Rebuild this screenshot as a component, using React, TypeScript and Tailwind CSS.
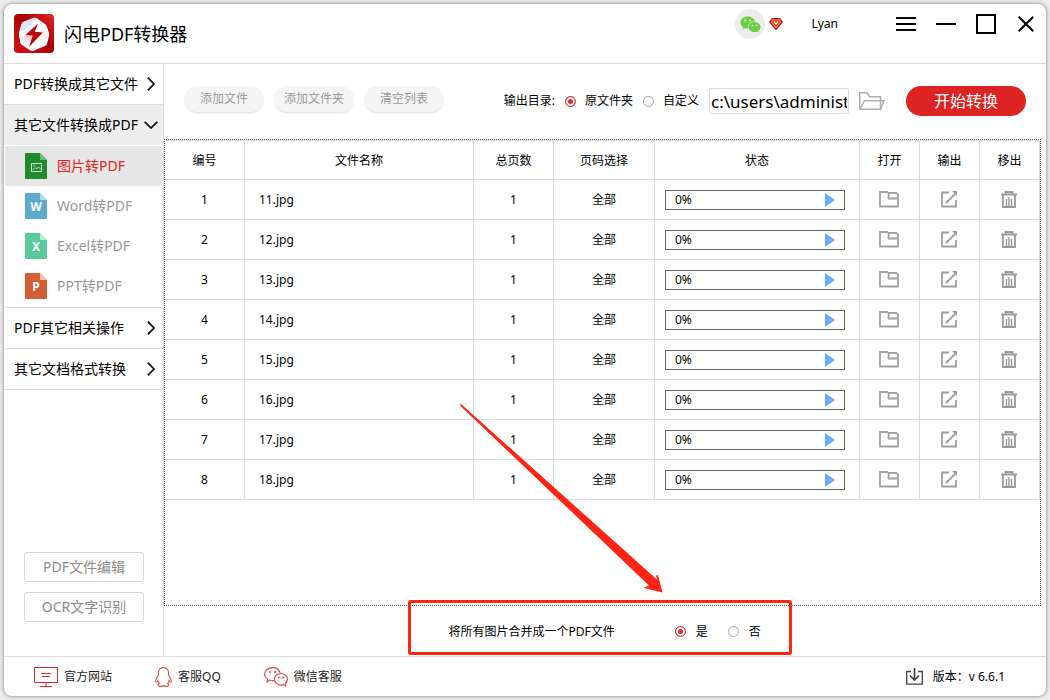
import { useState } from 'react';
import type { ReactNode } from 'react';
import { AiFillWechat } from 'react-icons/ai';

const files = [11, 12, 13, 14, 15, 16, 17, 18].map((n, i) => ({ id: i + 1, name: `${n}.jpg` }));

const radioClass =
  'size-[11px] shrink-0 appearance-none rounded-full border border-[#a8a8a8] bg-white checked:border-[#e02c2c] checked:bg-[#e02c2c] checked:shadow-[inset_0_0_0_2px_white]';

function Logo() {
  return (
    <svg width="40" height="40" viewBox="0 0 40 40" className="shrink-0" aria-hidden="true">
      <defs>
        <linearGradient id="logoBg" x1="1" y1="0" x2="0.2" y2="0.8">
          <stop offset="0" stopColor="#e62722" />
          <stop offset="0.55" stopColor="#a80007" />
          <stop offset="1" stopColor="#c90f14" />
        </linearGradient>
        <linearGradient id="logoPink" x1="1" y1="0" x2="0" y2="1">
          <stop offset="0" stopColor="#f0b4b8" />
          <stop offset="1" stopColor="#ffffff" />
        </linearGradient>
      </defs>
      <rect width="40" height="39" rx="4" fill="url(#logoBg)" />
      <path d="M18 4.500q3-1.500 5.500.3l7.500 5.200q1.500 1 2 3l2 6q.5 2-.2 4l-1.800 7q-.5 1.500-2 2L20 36.500q-2 .8-4-.3L8 31q-1.600-1-1.900-3L5 20q-.2-1.500.3-3L7.500 10q.6-1.600 2-2.200z" fill="#fff" />
      <path d="M18 4.500q3-1.500 5.500.3L13 15l-7 2 2-7q.5-1.600 2-2.200z" fill="#dfe4f2" />
      <path d="M12 21L5.500 24 5 19l8-3z" fill="#fff" />
      <path d="M12 20.500l7 1-2 5L6.500 29 6 25z" fill="url(#logoPink)" />
      <path d="M27 19l8-1-1 6-10 4z" fill="#fbeeee" />
      <path d="M24 9.500L11.500 21l7.200.6L15 33l13.800-14.500-8.100-.7z" fill="#b9060c" />
    </svg>
  );
}

function DiamondIcon() {
  return (
    <svg width="14" height="13" viewBox="0 0 14 13" aria-hidden="true">
      <path d="M3 0h8l3 4-7 8.500L0 4z" fill="#c4161c" />
      <path d="M3.500 1.500h7L12 4l-5 6.500L2 4z" fill="#f3b13d" />
      <path d="M4 2.500h6L11 4 7 9 3 4z" fill="#d3222a" />
      <path d="M4.800 3.500L7 6l2.200-2.500" fill="none" stroke="#fff" strokeWidth="1.300" />
    </svg>
  );
}

function Chevron({ open = false }: { open?: boolean }) {
  return open ? (
    <svg width="14" height="8" viewBox="0 0 14 8" fill="none" stroke="#111" strokeWidth="1.700" aria-hidden="true">
      <path d="M.7.8L7 7l6.300-6.200" />
    </svg>
  ) : (
    <svg width="8" height="14" viewBox="0 0 8 14" fill="none" stroke="#111" strokeWidth="1.700" aria-hidden="true">
      <path d="M.8.700L7 7 .8 13.300" />
    </svg>
  );
}

function FileIcon({ color, fold, children }: { color: string; fold: string; children: ReactNode }) {
  return (
    <span className="relative flex h-[26px] w-[22px] shrink-0 items-center justify-center pt-[2px] text-xs leading-none font-bold text-white">
      <svg className="absolute inset-0" width="22" height="26" viewBox="0 0 22 26" aria-hidden="true">
        <path d="M1 0h14l7 7v18a1 1 0 0 1-1 1H1a1 1 0 0 1-1-1V1a1 1 0 0 1 1-1z" fill={color} />
        <path d="M15 0l7 7h-6a1 1 0 0 1-1-1z" fill={fold} />
      </svg>
      <span className="relative">{children}</span>
    </span>
  );
}

function PictureGlyph() {
  return (
    <svg width="11" height="9" viewBox="0 0 11 9" fill="none" stroke="#c9e6cb" aria-hidden="true">
      <rect x=".5" y=".5" width="10" height="8" />
      <path d="M2 6.500L4 4.500l1.500 1.500L7.500 4 9.500 6" />
      <circle cx="3.200" cy="2.700" r=".4" />
    </svg>
  );
}

function FolderOpenIcon() {
  return (
    <svg width="26" height="18" viewBox="0 0 26 18" fill="none" stroke="#b0b0b0" strokeWidth="1.500" aria-hidden="true">
      <path d="M.75 17.250V.75H8l2.500 4H21.500v12.500z" />
      <path d="M1 17L5.500 8.750H25L21.500 17.250" />
    </svg>
  );
}

function OpenIcon() {
  return (
    <svg width="20" height="17" viewBox="0 0 20 17" fill="none" stroke="#a0a0a0" strokeWidth="2" aria-hidden="true">
      <path d="M9 1H1v14.500h18V3.500L17.500 2H9.500V7.500H19" strokeWidth="1.800" />
    </svg>
  );
}

function ExportIcon() {
  return (
    <svg width="17" height="17" viewBox="0 0 17 17" fill="none" stroke="#a0a0a0" strokeWidth="2" aria-hidden="true">
      <path d="M8 1.500H1V15.500h14V9" strokeWidth="1.800" />
      <path d="M5 12L15 2" strokeWidth="1.800" />
      <path d="M11 0h5v5z" fill="#a0a0a0" stroke="none" />
    </svg>
  );
}

function TrashIcon() {
  return (
    <svg width="16" height="17" viewBox="0 0 16 17" fill="none" stroke="#999" strokeWidth="1.800" aria-hidden="true">
      <path d="M0 3.500h16M4.500 3V1h7v2M2 4v12h12V4" />
      <path d="M5.500 8v8M8 6v10M10.500 8v8" strokeWidth="1.400" />
    </svg>
  );
}

function MonitorIcon() {
  return (
    <svg width="24" height="20" viewBox="0 0 24 20" fill="none" stroke="#dd2a2a" aria-hidden="true">
      <path d="M.5.500h23v15H.5zM7 6.500h10M8 9.500h8M12 16v3M6 19.500h12" />
    </svg>
  );
}

function QqIcon() {
  return (
    <svg width="17" height="20" viewBox="0 0 17 20" fill="none" stroke="#e04545" strokeWidth="1.100" aria-hidden="true">
      <path d="M3.500 7C3.200 2.800 5 .6 8.500.6S13.800 2.800 13.500 7c0 1.200.5 1.800 1.200 3 1.300 2.300 2 4.300 1.400 5-.6.400-1.500-.9-1.900-1.300-.2 1.400-.9 2.400-1.600 3 1 .5 1.600 1.200 1 2-.8 1-4 .8-5.100-.2-1.100 1-4.300 1.200-5.100.2-.6-.8 0-1.500 1-2-.7-.6-1.400-1.600-1.600-3-.4.400-1.300 1.700-1.900 1.300-.6-.7.100-2.700 1.400-5 .7-1.200 1.200-1.800 1.200-3z" />
    </svg>
  );
}

function WechatLineIcon() {
  return (
    <svg width="24" height="20" viewBox="0 0 24 20" fill="none" stroke="#e04545" strokeWidth="1.100" aria-hidden="true">
      <path d="M10 13.500c-1.500.3-3 .1-4.300-.4L3 15l.6-2.900C1.700 10.800.6 9 .6 7 .6 3.500 4 .6 8.500.6c4 0 7 2.300 7.700 5.400" />
      <path d="M17 6.500c-3.800 0-6.500 2.600-6.500 5.800s2.700 5.800 6.500 5.800c1 0 1.900-.2 2.700-.5l2 1.300-.4-2.200c1.300-1 2.100-2.600 2.100-4.400 0-3.200-2.700-5.800-6.400-5.800z" />
      <g fill="#e04545" stroke="none">
        <circle cx="6" cy="5" r="1" />
        <circle cx="11" cy="5" r="1" />
        <circle cx="14.800" cy="10.500" r=".9" />
        <circle cx="19.200" cy="10.500" r=".9" />
      </g>
    </svg>
  );
}

function DownloadIcon() {
  return (
    <svg width="17" height="17" viewBox="0 0 17 17" fill="none" stroke="#444" aria-hidden="true">
      <path d="M5 3.500H.7v12.700h15.600V3.500H12" strokeWidth="1.300" />
      <path d="M8.500 0v11.500M4 7.500L8.500 12 13 7.500" strokeWidth="1.700" />
    </svg>
  );
}

function TitleBar() {
  return (
    <header className="flex h-[60px] shrink-0 items-center border-b border-[#dcdcdc] pl-[10px]">
      <Logo />
      <h1 className="ml-[10px] text-lg leading-6">闪电PDF转换器</h1>
      <div className="ml-auto flex h-10 items-center self-start">
        <span className="flex size-[30px] items-center justify-center rounded-full bg-[#ececec]">
          <AiFillWechat size={23} color="#6bcf45" />
        </span>
        <span className="ml-1">
          <DiamondIcon />
        </span>
        <span className="mr-12 ml-7 text-xs">Lyan</span>
        <button type="button" aria-label="菜单" className="flex size-10 items-center justify-center">
          <svg width="20" height="14" viewBox="0 0 20 14" stroke="#000" strokeWidth="2">
            <path d="M0 1h20M0 7h20M0 13h20" />
          </svg>
        </button>
        <button type="button" aria-label="最小化" className="flex size-10 items-center justify-center">
          <svg width="20" height="2" viewBox="0 0 20 2" stroke="#000" strokeWidth="2">
            <path d="M0 1h20" />
          </svg>
        </button>
        <button type="button" aria-label="最大化" className="flex size-10 items-center justify-center">
          <svg width="20" height="20" viewBox="0 0 20 20" fill="none" stroke="#000" strokeWidth="2">
            <path d="M1 1h18v18H1z" />
          </svg>
        </button>
        <button type="button" aria-label="关闭" className="flex size-10 items-center justify-center">
          <svg width="16" height="16" viewBox="0 0 16 16" stroke="#000" strokeWidth="2">
            <path d="M.7.700l14.600 14.600M15.300.700L.7 15.300" />
          </svg>
        </button>
      </div>
    </header>
  );
}

function MenuGroup({ label, open }: { label: string; open?: boolean }) {
  return (
    <button
      type="button"
      aria-expanded={!!open}
      className={`flex h-[41px] w-full items-center justify-between border-b pl-[10px] text-sm ${
        open ? 'border-white bg-[#ededed] pr-[5px]' : 'border-[#dcdcdc] pr-2'
      }`}
    >
      {label}
      <Chevron open={open} />
    </button>
  );
}

function MenuItem({ label, icon, active }: { label: string; icon: ReactNode; active?: boolean }) {
  return (
    <a
      href="#"
      className={`mx-px flex h-10 items-center gap-[10px] pl-5 text-sm ${
        active ? 'bg-[#e6e6e6] text-[#dd2323]' : 'text-[#999]'
      }`}
    >
      {icon}
      {label}
    </a>
  );
}

function Sidebar() {
  return (
    <aside className="flex w-40 shrink-0 flex-col border-r border-[#dcdcdc]">
      <nav>
        <MenuGroup label="PDF转换成其它文件" />
        <MenuGroup label="其它文件转换成PDF" open />
        <div className="border-b border-[#dcdcdc] pb-px">
          <MenuItem active label="图片转PDF" icon={<FileIcon color="#1d8b2b" fold="#6fbd78"><PictureGlyph /></FileIcon>} />
          <MenuItem label="Word转PDF" icon={<FileIcon color="#5aabcd" fold="#b5d8e8">W</FileIcon>} />
          <MenuItem label="Excel转PDF" icon={<FileIcon color="#5acb9b" fold="#b8ead5">X</FileIcon>} />
          <MenuItem label="PPT转PDF" icon={<FileIcon color="#d35d35" fold="#ecc4b4">P</FileIcon>} />
        </div>
        <MenuGroup label="PDF其它相关操作" />
        <MenuGroup label="其它文档格式转换" />
      </nav>
      <div className="mt-auto mb-[34px] flex flex-col gap-[10px] pr-[19px] pl-5 text-sm text-[#8c8c8c]">
        <button type="button" className="h-[30px] rounded-[3px] border border-[#d9d9d9]">PDF文件编辑</button>
        <button type="button" className="h-[30px] rounded-[3px] border border-[#d9d9d9]">OCR文字识别</button>
      </div>
    </aside>
  );
}

function Toolbar() {
  const [target, setTarget] = useState('source');
  const [path, setPath] = useState('c:\\users\\administrator\\desktop');

  return (
    <div className="flex h-[75px] shrink-0 items-center px-5 pb-px text-xs">
      <div className="flex gap-[10px] text-[#999]">
        {['添加文件', '添加文件夹', '清空列表'].map((label) => (
          <button
            key={label}
            type="button"
            className="mb-1 h-[26px] w-20 rounded-full bg-[#f5f5f5] shadow-[0_2px_2px_-1px_#dddddd]"
          >
            {label}
          </button>
        ))}
      </div>
      <div className="ml-auto flex items-center gap-[10px]">
        <span>输出目录:</span>
        <label className="flex items-center gap-[9px]">
          <input type="radio" name="target" className={radioClass} checked={target === 'source'} onChange={() => setTarget('source')} />
          原文件夹
        </label>
        <label className="flex items-center gap-[9px]">
          <input type="radio" name="target" className={radioClass} checked={target === 'custom'} onChange={() => setTarget('custom')} />
          自定义
        </label>
        <input
          type="text"
          aria-label="输出目录"
          value={path}
          onChange={(e) => setPath(e.target.value)}
          className="h-[26px] w-[140px] rounded-xs border border-[#dcdcdc] px-px text-[17px] leading-6"
        />
        <button type="button" aria-label="浏览">
          <FolderOpenIcon />
        </button>
        <button type="button" className="ml-[11px] h-[30px] w-[120px] rounded-full bg-[#dd2423] text-base text-white">
          开始转换
        </button>
      </div>
    </div>
  );
}

const th = 'h-10 border-r border-b border-t border-[#dcdcdc] px-0 pt-[2px] pb-0 font-normal';
const td = 'h-10 border-r border-b border-[#dcdcdc] p-0 text-center';

function FileTable() {
  return (
    <div className="min-h-0 flex-1 border border-dotted border-[#555]">
      <table className="w-full table-fixed border-separate border-spacing-0 text-xs">
        <thead>
          <tr>
            <th className={`${th} w-20`}>编号</th>
            <th className={th}>文件名称</th>
            <th className={`${th} w-20`}>总页数</th>
            <th className={`${th} w-[101px]`}>页码选择</th>
            <th className={`${th} w-[205px]`}>状态</th>
            <th className={`${th} w-[60px]`}>打开</th>
            <th className={`${th} w-[60px]`}>输出</th>
            <th className={`${th} w-[60px]`}>移出</th>
          </tr>
        </thead>
        <tbody>
          {files.map((file) => (
            <tr key={file.id}>
              <td className={td}>{file.id}</td>
              <td className="h-10 border-r border-b border-[#dcdcdc] p-0 pl-[14px] text-left">{file.name}</td>
              <td className={td}>1</td>
              <td className={td}>全部</td>
              <td className={td}>
                <div className="mr-[14px] ml-[10px] flex h-5 items-center justify-between border border-[#666] px-[9px]">
                  0%
                  <svg width="10" height="14" viewBox="0 0 10 14" fill="#6aabff" aria-hidden="true">
                    <path d="M0 0l10 7-10 7z" />
                  </svg>
                </div>
              </td>
              <td className={td}>
                <button type="button" aria-label="打开" className="flex w-full justify-center pr-px"><OpenIcon /></button>
              </td>
              <td className={td}>
                <button type="button" aria-label="输出" className="flex w-full justify-center pr-px"><ExportIcon /></button>
              </td>
              <td className={td}>
                <button type="button" aria-label="移出" className="flex w-full justify-center pr-px"><TrashIcon /></button>
              </td>
            </tr>
          ))}
        </tbody>
      </table>
    </div>
  );
}

function MergeOption() {
  const [merge, setMerge] = useState(true);

  return (
    <div className="relative mx-auto -mt-[6px] mb-px flex h-[55px] w-96 shrink-0 items-center rounded-[3px] border-3 border-[#ff2414] pt-2 pl-[38px] text-xs">
      <span>将所有图片合并成一个PDF文件</span>
      <label className="ml-[60px] flex items-center gap-[10px]">
        <input type="radio" name="merge" className={radioClass} checked={merge} onChange={() => setMerge(true)} />
        是
      </label>
      <label className="ml-5 flex items-center gap-[10px]">
        <input type="radio" name="merge" className={radioClass} checked={!merge} onChange={() => setMerge(false)} />
        否
      </label>
      <svg
        className="pointer-events-none absolute bottom-[59px] left-[49px]"
        width="203"
        height="189"
        viewBox="0 0 203 189"
        fill="#ff2414"
        aria-hidden="true"
      >
        <path d="M0 .500L1 0 197.500 176 196 171.500l2-.5L202.500 188.500 183.500 184l5.500-2.500L.5 2z" />
      </svg>
    </div>
  );
}

function Footer() {
  return (
    <footer className="flex h-10 shrink-0 items-center border-t border-[#dcdcdc] pr-[41px] pl-[30px] text-xs text-[#222]">
      <div className="flex gap-[43px]">
        <a href="#" className="flex items-center gap-[6px]"><MonitorIcon />官方网站</a>
        <a href="#" className="flex items-center gap-[6px]"><QqIcon />客服QQ</a>
        <a href="#" className="flex items-center gap-[6px]"><WechatLineIcon />微信客服</a>
      </div>
      <span className="ml-auto flex items-center gap-[10px] text-black">
        <DownloadIcon />
        版本：v 6.6.1
      </span>
    </footer>
  );
}

export default function App() {
  return (
    <div
      lang="zh-CN"
      className="flex h-screen bg-[#eeeeee] p-1 font-['Noto_Sans','Noto_Sans_CJK_SC',sans-serif] text-black"
    >
      <div className="flex min-w-0 flex-1 flex-col rounded-lg bg-white shadow-[0_0_4px_#777777]">
        <TitleBar />
        <div className="flex min-h-0 flex-1">
          <Sidebar />
          <main className="flex min-w-0 flex-1 flex-col">
            <Toolbar />
            <div className="flex min-h-0 flex-1 flex-col pr-[5px]">
              <FileTable />
              <div className="flex shrink-0 pr-[6px]">
                <MergeOption />
              </div>
            </div>
          </main>
        </div>
        <Footer />
      </div>
    </div>
  );
}
